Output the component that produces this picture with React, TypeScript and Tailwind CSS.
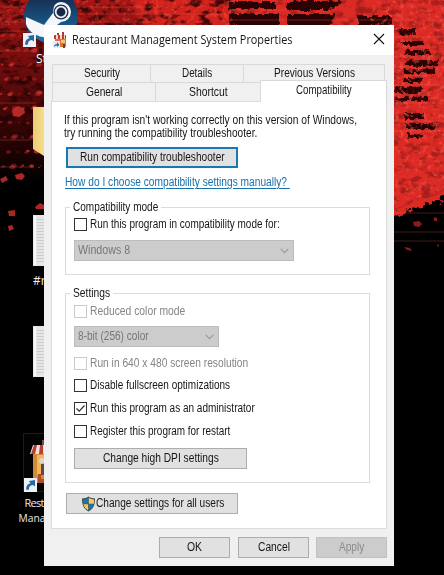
import { useLayoutEffect, useRef, useState, type ReactNode } from "react";

/* One line of text condensed or widened to an exact width. */
function Fit({ w, children, className = "", line = "" }: { w: number; children: ReactNode; className?: string; line?: string }) {
  const ref = useRef<HTMLSpanElement>(null);
  const [scale, setScale] = useState(1);
  useLayoutEffect(() => {
    if (ref.current) setScale(w / ref.current.offsetWidth);
  }, [w]);
  return (
    <span className={`block shrink-0 whitespace-nowrap ${className}`} style={{ width: w }}>
      <span ref={ref} className={`inline-block origin-left ${line}`} style={{ transform: `scaleX(${scale})` }}>
        {children}
      </span>
    </span>
  );
}

function Check({ label, w, checked, disabled }: { label: string; w: number; checked?: boolean; disabled?: boolean }) {
  return (
    <div className={`flex h-[13px] items-center gap-[3px] ${disabled ? "text-[#858585]" : ""}`}>
      <span className={`flex h-[13px] w-[13px] shrink-0 items-center justify-center border bg-white ${disabled ? "border-[#cbcbcb]" : "border-[#333]"}`}>
        {checked && (
          <svg width="11" height="11" viewBox="0 0 11 11" fill="none" stroke="#333" strokeWidth="1.2">
            <path d="M1.5 5.5 4.2 8.2 9.5 2.5" />
          </svg>
        )}
      </span>
      <Fit w={w}>{label}</Fit>
    </div>
  );
}

function Select({ label, w, className }: { label: string; w: number; className: string }) {
  return (
    <div className={`flex h-[21px] items-center justify-between border border-[#bcbcbc] bg-[#cccccc] pr-1 pl-[3px] text-[#777] ${className}`}>
      <Fit w={w}>{label}</Fit>
      <svg width="9" height="6" viewBox="0 0 9 6" fill="none" stroke="#999" strokeWidth="1.1">
        <path d="M.7.8 4.5 4.7 8.3.8" />
      </svg>
    </div>
  );
}

function Button({ label, w, className, icon }: { label: string; w: number; className: string; icon?: ReactNode }) {
  return (
    <button className={`flex h-[21px] items-center justify-center ${className}`}>
      {icon}
      <Fit w={w}>{label}</Fit>
    </button>
  );
}

function Shield() {
  return (
    <svg width="15" height="16" viewBox="0 0 15 16" className="shrink-0">
      <path d="M7.5.5C9.5 2 12 2.4 14 2.5c.2 6-1.5 10.300-6.500 13C2.500 12.800.800 8.500 1 2.500 3 2.400 5.500 2 7.500.500Z" fill="#444f55" />
      <path d="M7.200 1.800v6H2.200Q1.800 5.500 2 3.500 5 3.300 7.200 1.800Z" fill="#1674b8" />
      <path d="M7.800 1.800v6h5q.4-2.300.2-4.300Q10 3.300 7.800 1.800Z" fill="#f2cc57" />
      <path d="M2.300 8.200h4.900v6Q3.300 12 2.300 8.200Z" fill="#f2cc57" />
      <path d="M7.800 8.200h4.900q-1 3.800-4.900 6Z" fill="#1674b8" />
    </svg>
  );
}

function ShopIcon() {
  return (
    <svg width="14" height="17" viewBox="0 0 14 17" className="shrink-0">
      <path d="M2 4h11v11H2Z" fill="#df7635" />
      <path d="M4 1h2v3H4ZM9 0h2v4H9Z" fill="#9b4338" />
      <path d="M1 3h12v4H1Z" fill="#c33b31" />
      <path d="M3 3h2v4H3ZM7 3h2v4H7ZM11 3h1v4h-1Z" fill="#f5d4bd" />
      <path d="M8 8h4v3H8Z" fill="#f6c46c" />
      <path d="M10 12h2v4h-2Z" fill="#764036" />
      <path d="M0 9h7v7H0Z" fill="#e6edf4" />
      <path d="M1 15q0-3 3-3v-2l2.500 3L4 15v-1.500Q2 13.500 1 15Z" fill="#326ba7" />
    </svg>
  );
}

function Shortcut({ x, y }: { x: number; y: number }) {
  return (
    <g transform={`translate(${x} ${y})`}>
      <rect width="13" height="14" fill="#edf1f5" />
      <path d="M2.500 12C1.500 8 4 5.500 6.500 5.500L5 3l6-1v6.500L8.800 7C6 7.500 4.500 9 5 11.500Z" fill="#2865a5" />
    </g>
  );
}

/* Deterministic speckles scattered over the left edge of the wallpaper. */
const specks = Array.from({ length: 80 }, (_, i) => ({
  x: (i * 17.7 + (i % 7) * 9.1) % 46,
  y: 20 + ((i * 23.3 + (i % 5) * 5.7) % 160),
  r: 0.8 + (i % 5) * 0.45,
}));

function Desktop() {
  return (
    <svg width="444" height="575" viewBox="0 0 444 575" className="block">
      <defs>
        <filter id="dark" x="0" y="0" width="444" height="230" filterUnits="userSpaceOnUse" colorInterpolationFilters="sRGB">
          <feTurbulence type="fractalNoise" baseFrequency="0.09 0.14" numOctaves="4" seed="8" />
          <feColorMatrix values="0 0 0 0 .14  0 0 0 0 .01  0 0 0 0 .01  4 0 0 0 -1.9" />
          <feComposite in2="SourceGraphic" operator="in" />
        </filter>
        <filter id="light" x="0" y="0" width="444" height="230" filterUnits="userSpaceOnUse" colorInterpolationFilters="sRGB">
          <feTurbulence type="fractalNoise" baseFrequency="0.22" numOctaves="3" seed="21" />
          <feColorMatrix values="0 0 0 0 .98  0 0 0 0 .36  0 0 0 0 .3  0 5 0 0 -2.7" />
          <feComposite in2="SourceGraphic" operator="in" />
        </filter>
        <filter id="rough" x="-10" y="-12" width="470" height="252" filterUnits="userSpaceOnUse" colorInterpolationFilters="sRGB">
          <feTurbulence type="fractalNoise" baseFrequency="0.16" numOctaves="3" seed="4" />
          <feDisplacementMap in="SourceGraphic" scale="14" xChannelSelector="R" yChannelSelector="G" />
        </filter>
        <filter id="ragged" x="200" y="-12" width="250" height="252" filterUnits="userSpaceOnUse" colorInterpolationFilters="sRGB">
          <feTurbulence type="fractalNoise" baseFrequency="0.2" numOctaves="2" seed="9" />
          <feDisplacementMap in="SourceGraphic" scale="6" xChannelSelector="R" yChannelSelector="G" result="shape" />
          <feGaussianBlur in="shape" stdDeviation=".5" />
        </filter>
        <filter id="soft" x="-20%" y="-60%" width="140%" height="220%"><feGaussianBlur stdDeviation="3" /></filter>
        <linearGradient id="left" x1="0" y1="0" x2="0" y2="1">
          <stop stopColor="#a81515" />
          <stop offset=".3" stopColor="#7c0e0e" />
          <stop offset=".7" stopColor="#360506" />
          <stop offset="1" stopColor="#000" />
        </linearGradient>
        <linearGradient id="steam" x1="0" y1="0" x2="0" y2="1">
          <stop stopColor="#14203f" />
          <stop offset="1" stopColor="#1c76ad" />
        </linearGradient>
        <linearGradient id="folder"><stop stopColor="#e8cc72" /><stop offset="1" stopColor="#f6dd8d" /></linearGradient>
      </defs>
      <rect width="444" height="575" fill="#000" />
      <rect width="240" height="182" fill="url(#left)" />
      <path d="M130 -6H234V30H145Z" fill="#d3231e" filter="url(#soft)" />
      <path d="M228 -10H456V190L440 199 425 205 410 212 388 216V60H222Z" fill="#dc2a25" filter="url(#rough)" />
      <g fill="#2b0305" filter="url(#ragged)">
        <path d="M229 2h46v7h-46ZM229 14h50v12h-50ZM288 1h58l-18 9h-40ZM288 14h48l-7 12h-41ZM358 16h34v10h-34Z" />
        <path d="M396 29h20v6h-16ZM398 41h26v4h-22ZM406 50h25v5h-27ZM407 60h32l-3 6h-31ZM404 69h31v5h-32ZM403 78h18v5h-19ZM396 87h26v6h-27ZM396 97h31v4h-32ZM404 113h20v6h-19ZM406 123h29v6h-29ZM407 134h17v4h-17Z" />
      </g>
      <path d="M0 0H235V150H0Z" filter="url(#dark)" opacity=".85" />
      <path d="M225 0H444V192L394 210V25H225Z" filter="url(#dark)" opacity=".3" />
      <path d="M0 0H235V25H0Z" filter="url(#light)" opacity=".35" />
      <path d="M370 0H444V190L394 206V25H370Z" filter="url(#light)" opacity=".5" />
      <g fill="#d33231">
        {specks.map((s, i) => (
          <ellipse key={i} cx={s.x} cy={s.y} rx={s.r * 1.15} ry={s.r * 0.8} opacity={i % 3 ? 0.4 : 0.75} />
        ))}
        <path d="m12 110 6-4 6 2 1 5-6 4-6-1ZM15 175l7-2 3 3-3 4-6-1ZM0 179l6-3 2 4-6 3ZM8 211l7-1v6H9ZM8 226l4-1 2 4-5 2ZM35 207l5-4 4 2v4h-8Z" opacity=".8" />
        <path d="m413 222 6-1 3 3-3 3-5-1ZM404 247l6 1 2 3-5-1ZM434 217l3 1v3h-3ZM437 244l2 1-1 3Z" fill="#8c1c1a" />
      </g>
      <g stroke="#f16a5b" strokeWidth=".7" opacity=".4">
        <path d="M0 7H175M20 14H225M0 22H150M230 10H290M230 20H444M0 31H30M0 51H30M0 103H36M0 140H30M0 167H34" />
        <path d="M394 37H444M394 47H437M394 57H440M394 67H444M394 76H430M394 85H444M394 95H430M394 103H444M394 121H444M394 131H440M394 213H444M394 232H444M394 241H444" />
      </g>
      <circle cx="51" cy="16" r="27" fill="url(#steam)" />
      <path d="M26 17 44 25 53 13Q53 2 61 2A10 10 0 0 1 61 22L53 28 48 38Q30 36 26 24Z" fill="#f4f6f9" />
      <circle cx="61" cy="12" r="7.500" fill="#172746" />
      <circle cx="61" cy="12" r="5.300" fill="#172746" stroke="#e7edf4" strokeWidth="1.800" />
      <Shortcut x={23} y={33} />
      <text x="36" y="63" fill="#fff" fontSize="12" className="font-['Open_Sans']">St</text>
      <path d="M33 107H44V156L33 149Z" fill="url(#folder)" />
      {[215, 326].map((y) => (
        <g key={y}>
          <rect x="33" y={y} width="11" height="51" fill="#e6e6e6" />
          <path d={`M35 ${y + 1}V${y + 50}`} stroke="#f8f8f8" strokeWidth="2" />
          {Array.from({ length: 15 }, (_, i) => (
            <path key={i} d={`M37 ${y + 4.500 + i * 3}H44`} stroke="#c6c6c6" strokeWidth=".8" />
          ))}
        </g>
      ))}
      <text x="33" y="285" fill="#eee" fontSize="12" className="font-['Open_Sans']">#r</text>
      <rect x="23.500" y="433.500" width="40" height="58" fill="#030303" stroke="#1c1c1c" />
      <path d="M33 453H50V483H33Z" fill="#d28a38" />
      <path d="M37 455H50V475H37Z" fill="#efb65b" />
      <path d="M41 460h5v15h-5Z" fill="#594c43" />
      <circle cx="42" cy="461" r="3" fill="#ddd7c8" />
      <path d="M38 474h3v9h-3ZM41 479h5v4h-5Z" fill="#b64b23" />
      <path d="M33 445h13v9H30Z" fill="#f7ded4" />
      <path d="M34 445h3l-2 9h-4ZM40 445h3v9h-4Z" fill="#b83c38" />
      <path d="M42 440h4v5h-4Z" fill="#765048" />
      <Shortcut x={24} y={478} />
      <g fill="#e9e9e9" fontSize="11" className="font-['Open_Sans']">
        <text x="24.500" y="506.500" textLength="20">Rest</text>
        <text x="18.500" y="522" textLength="27" lengthAdjust="spacingAndGlyphs">Mana</text>
      </g>
    </svg>
  );
}

function Tab({ label, w, className }: { label: string; w: number; className: string }) {
  return (
    <div className={`flex items-center justify-center border-[#d9d9d9] ${className}`}>
      <Fit w={w}>{label}</Fit>
    </div>
  );
}

function Legend({ label, w }: { label: string; w: number }) {
  return (
    <legend className="-ml-[4px] h-[14px] px-[3px] leading-[14px]">
      <Fit w={w}>{label}</Fit>
    </legend>
  );
}

const plain = "border border-[#adadad] bg-[#e1e1e1]";

export default function App() {
  return (
    <div className="relative h-[575px] w-[444px] overflow-hidden bg-black">
      <Desktop />
      <main className="absolute top-[25px] left-[44px] flex h-[541px] w-[350px] flex-col bg-[#f0f0f0] font-['Liberation_Sans',sans-serif] text-[12.5px] leading-[13px] text-[#161616]">
        <header className="flex h-[30px] shrink-0 items-center bg-white pl-[9px] font-['Open_Sans',sans-serif] text-[12px]">
          <ShopIcon />
          <Fit w={220} className="ml-[5px] pb-[2px]">Restaurant Management System Properties</Fit>
          <svg width="12" height="12" viewBox="0 0 12 12" className="mb-[2px] ml-[81px]" stroke="#111" strokeWidth="1.100">
            <path d="M1 1 11 11M11 1 1 11" />
          </svg>
        </header>

        <nav className="mt-[9px] ml-[7px] h-[37px] w-[336px] shrink-0">
          <div className="ml-[1px] flex h-[18px] w-[333px]">
            <Tab label="Security" w={36} className="w-[98px] border-t border-l" />
            <Tab label="Details" w={30} className="w-[93px] border-t border-l" />
            <Tab label="Previous Versions" w={81} className="w-[142px] border-x border-t" />
          </div>
          <div className="ml-[1px] flex h-[19px] items-end">
            <Tab label="General" w={36} className="h-[19px] w-[103px] border-t border-l" />
            <Tab label="Shortcut" w={39} className="h-[19px] w-[105px] border-t border-l" />
            <Tab label="Compatibility" w={56} className="relative z-10 -mb-px h-[22px] w-[127px] border-x border-t bg-white pb-[2px]" />
          </div>
        </nav>

        <section className="ml-[7px] flex h-[428px] w-[336px] shrink-0 flex-col border border-[#dcdcdc] bg-white pl-[13px]">
          <div className="mt-[12px] ml-[-1px]">
            <Fit w={293}>If this program isn't working correctly on this version of Windows,</Fit>
            <Fit w={193}>try running the compatibility troubleshooter.</Fit>
          </div>
          <Button label="Run compatibility troubleshooter" w={145} className="mt-[7px] ml-[1px] w-[172px] shrink-0 border-2 border-[#1878b4] bg-[#e1e1e1]" />
          <Fit w={225} className="mt-[8px] h-[13px] text-[#1672ac]" line="underline underline-offset-2">How do I choose compatibility settings manually?&nbsp;</Fit>

          <fieldset className="mt-[11px] h-[75px] w-[305px] shrink-0 border border-[#dcdcdc] pl-[8px]">
            <Legend label="Compatibility mode" w={85} />
            <div className="mt-[4px]"><Check label="Run this program in compatibility mode for:" w={190} /></div>
            <Select label="Windows 8" w={52} className="mt-[9px] w-[220px]" />
          </fieldset>

          <fieldset className="mt-[11px] h-[197px] w-[305px] shrink-0 border border-[#dcdcdc] pl-[8px]">
            <Legend label="Settings" w={37} />
            <div className="mt-[5px]"><Check label="Reduced color mode" w={95} disabled /></div>
            <Select label="8-bit (256) color" w={71} className="mt-[8px] w-[145px]" />
            <div className="mt-[10px]"><Check label="Run in 640 x 480 screen resolution" w={158} disabled /></div>
            <div className="mt-[9px] flex flex-col gap-[10px]">
              <Check label="Disable fullscreen optimizations" w={140} />
              <Check label="Run this program as an administrator" w={165} checked />
              <Check label="Register this program for restart" w={140} />
            </div>
            <Button label="Change high DPI settings" w={116} className={`mt-[10px] w-[173px] ${plain}`} />
          </fieldset>

          <Button label="Change settings for all users" w={128} icon={<Shield />} className={`mt-[10px] ml-[1px] w-[172px] shrink-0 ${plain}`} />
        </section>

        <footer className="mt-[8px] flex pl-[115px]">
          <Button label="OK" w={15} className={`w-[71px] ${plain}`} />
          <Button label="Cancel" w={32} className={`ml-[8px] w-[71px] ${plain}`} />
          <Button label="Apply" w={25} className="ml-[7px] w-[71px] border border-[#c2c2c2] bg-[#cccccc] text-[#8b8b8b]" />
        </footer>
      </main>
    </div>
  );
}
